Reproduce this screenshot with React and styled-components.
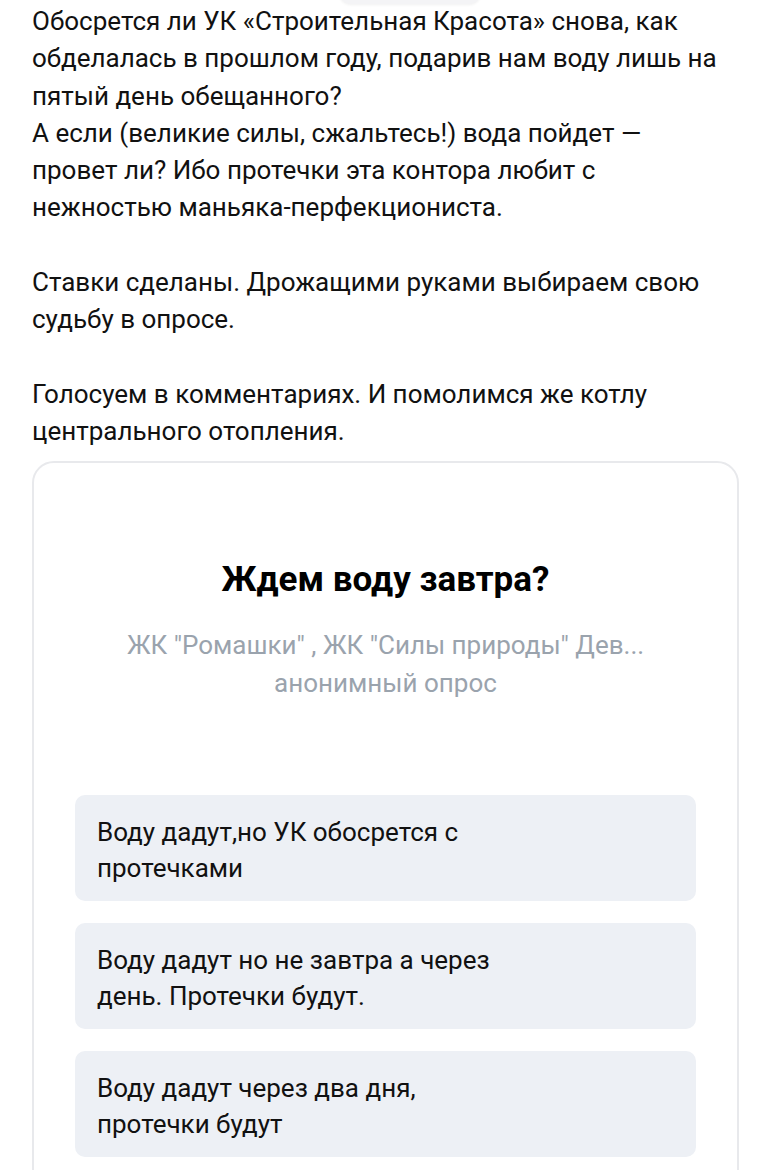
import React from "react";
import styled, { createGlobalStyle } from "styled-components";

const GlobalStyle = createGlobalStyle`
  html, body {
    margin: 0;
    padding: 0;
    background: #ffffff;
  }
  body {
    font-family: Roboto, "Noto Sans", "Liberation Sans", sans-serif;
    color: #000000;
  }
`;

const Page = styled.div`
  width: 767px;
  height: 1170px;
  overflow: hidden;
  position: relative;
  padding: 3px 0 0 32px;
  box-sizing: border-box;
`;

const TopHandle = styled.div`
  position: absolute;
  top: -16px;
  left: 340px;
  width: 140px;
  height: 20px;
  border-radius: 12px;
  background: #f4f4f6;
  box-shadow: 0 1px 3px rgba(0, 0, 0, 0.06);
`;

const PostText = styled.div`
  font-size: 26px;
  line-height: 37.3px;
  color: #111111;
  white-space: nowrap;
`;

const Paragraph = styled.p`
  margin: 0 0 37.3px 0;
  &:last-child {
    margin-bottom: 0;
  }
`;

const PollCard = styled.div`
  margin-top: 10px;
  width: 707px;
  box-sizing: border-box;
  border: 2px solid #e8e9ec;
  border-radius: 22px;
  padding: 97px 41px 40px 41px;
  display: flex;
  flex-direction: column;
  align-items: center;
`;

const PollTitle = styled.h2`
  margin: 0;
  font-size: 35px;
  font-weight: 700;
  line-height: 40px;
  color: #000000;
  text-align: center;
`;

const PollMeta = styled.div`
  margin-top: 26px;
  font-size: 26px;
  line-height: 38px;
  color: #9aa3ad;
  text-align: center;
`;

const Options = styled.div`
  margin-top: 93px;
  width: 100%;
  display: flex;
  flex-direction: column;
  gap: 22px;
`;

const Option = styled.div`
  background: #edf0f5;
  border-radius: 10px;
  padding: 19px 22px;
  height: 106px;
  box-sizing: border-box;
  font-size: 26px;
  line-height: 36px;
  color: #111111;
  white-space: nowrap;
`;

const paragraphs = [
  [
    "Обосрется ли УК «Строительная Красота» снова, как",
    "обделалась в прошлом году, подарив нам воду лишь на",
    "пятый день обещанного?",
    "А если (великие силы, сжальтесь!) вода пойдет —",
    "провет ли? Ибо протечки эта контора любит с",
    "нежностью маньяка-перфекциониста.",
  ],
  ["Ставки сделаны. Дрожащими руками выбираем свою", "судьбу в опросе."],
  ["Голосуем в комментариях. И помолимся же котлу", "центрального отопления."],
];

const options = [
  ["Воду дадут,но УК обосрется с", "протечками"],
  ["Воду дадут но не завтра а через", "день. Протечки будут."],
  ["Воду дадут через два дня,", "протечки будут"],
];

function Lines({ lines }) {
  return lines.map((line, j) => (
    <React.Fragment key={j}>
      {j > 0 && <br />}
      {line}
    </React.Fragment>
  ));
}

export default function App() {
  return (
    <>
      <GlobalStyle />
      <Page>
        <TopHandle />
        <PostText>
          {paragraphs.map((lines, i) => (
            <Paragraph key={i}>
              <Lines lines={lines} />
            </Paragraph>
          ))}
        </PostText>
        <PollCard>
          <PollTitle>Ждем воду завтра?</PollTitle>
          <PollMeta>
            ЖК "Ромашки" , ЖК "Силы природы" Дев...
            <br />
            анонимный опрос
          </PollMeta>
          <Options>
            {options.map((lines, i) => (
              <Option key={i}>
                <Lines lines={lines} />
              </Option>
            ))}
          </Options>
        </PollCard>
      </Page>
    </>
  );
}
